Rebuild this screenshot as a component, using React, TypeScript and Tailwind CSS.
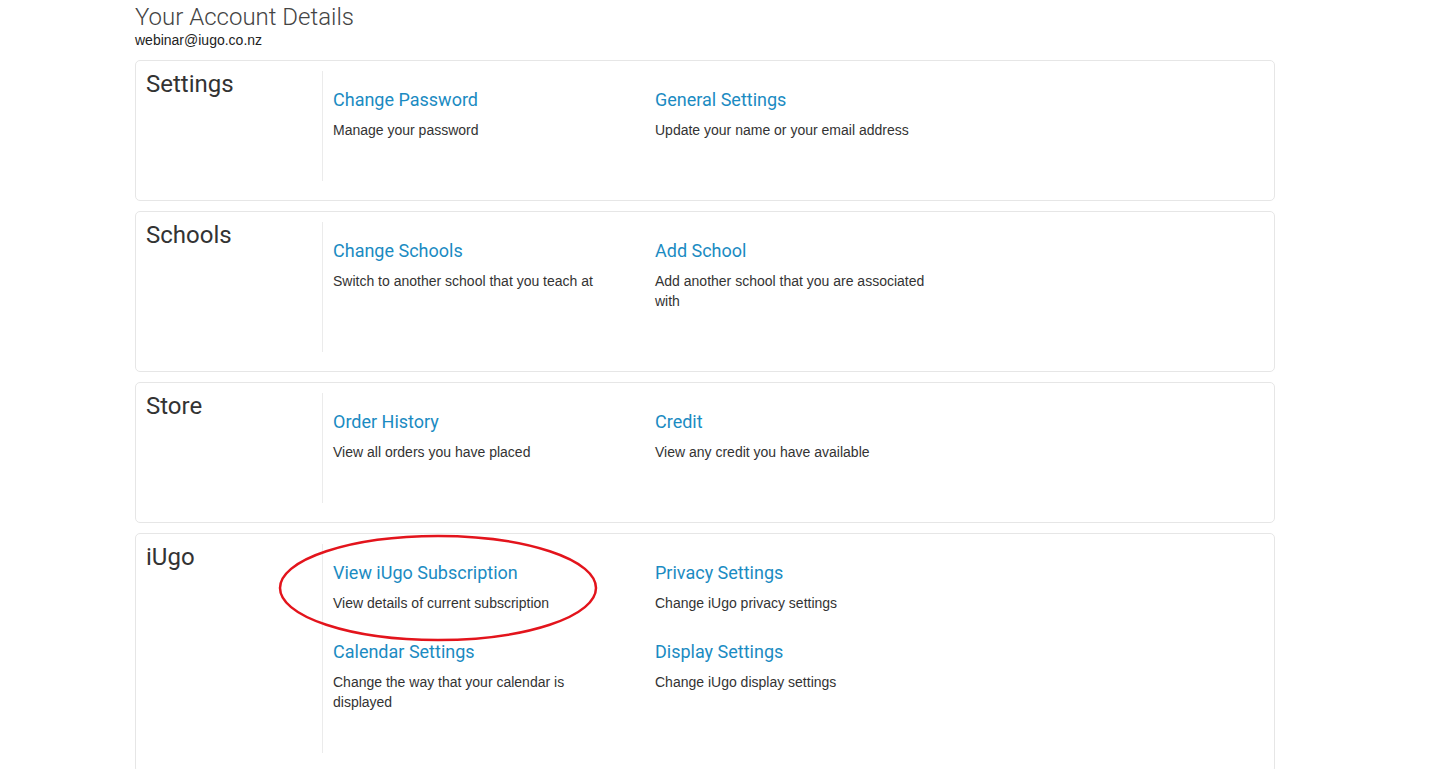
import React from "react";

type Item = { title: string; desc: string };
type Section = { name: string; items: Item[] };

const sections: Section[] = [
  {
    name: "Settings",
    items: [
      { title: "Change Password", desc: "Manage your password" },
      { title: "General Settings", desc: "Update your name or your email address" },
    ],
  },
  {
    name: "Schools",
    items: [
      { title: "Change Schools", desc: "Switch to another school that you teach at" },
      { title: "Add School", desc: "Add another school that you are associated with" },
    ],
  },
  {
    name: "Store",
    items: [
      { title: "Order History", desc: "View all orders you have placed" },
      { title: "Credit", desc: "View any credit you have available" },
    ],
  },
  {
    name: "iUgo",
    items: [
      { title: "View iUgo Subscription", desc: "View details of current subscription" },
      { title: "Privacy Settings", desc: "Change iUgo privacy settings" },
      { title: "Calendar Settings", desc: "Change the way that your calendar is displayed" },
      { title: "Display Settings", desc: "Change iUgo display settings" },
    ],
  },
];

function Card({ section, children }: { section: Section; children?: React.ReactNode }) {
  return (
    <div className="relative flex rounded-[5px] border border-[#e6e6e6] bg-white pl-[10px] pt-[10px] pb-[19px]">
      <div className="w-[176px] shrink-0">
        <h2 className="-mt-px font-['Roboto'] text-[24px] leading-[28px] font-normal text-[#333]">
          {section.name}
        </h2>
      </div>
      <div className="border-l border-[#ebebeb] pl-[10px] pt-[16px] pb-[15px]">
        <div className="grid grid-cols-[322px_322px]">
          {section.items.map((it) => (
            <div key={it.title} className="mb-[26px] w-[282px]">
              <a
                href="#"
                className="block font-['Roboto'] text-[18px] leading-[26px] text-[#1b8bc2]"
              >
                {it.title}
              </a>
              <p className="mt-[7px] font-['Liberation_Sans',Arial,sans-serif] text-[14px] leading-[20px] text-[#333]">
                {it.desc}
              </p>
            </div>
          ))}
        </div>
      </div>
      {children}
    </div>
  );
}

export default function App() {
  return (
    <div className="h-[769px] overflow-hidden bg-white">
      <div className="ml-[135px] w-[1140px] pt-[3px]">
        <h1 className="font-['Roboto'] text-[24px] leading-[28px] font-light text-[#444]">
          Your Account Details
        </h1>
        <div className="mt-[1px] font-['Liberation_Sans',Arial,sans-serif] text-[14px] leading-[16px] text-[#222]">
          webinar@iugo.co.nz
        </div>
        <div className="mt-[12px] flex flex-col gap-[10px]">
          {sections.map((s) => (
            <Card key={s.name} section={s}>
              {s.name === "iUgo" && (
                <svg
                  className="pointer-events-none absolute left-[142px] top-[0px]"
                  width="324"
                  height="110"
                  viewBox="0 0 324 110"
                >
                  <ellipse
                    cx="160"
                    cy="54"
                    rx="158"
                    ry="52"
                    fill="none"
                    stroke="#e3141c"
                    strokeWidth="2.5"
                  />
                </svg>
              )}
            </Card>
          ))}
        </div>
      </div>
    </div>
  );
}
